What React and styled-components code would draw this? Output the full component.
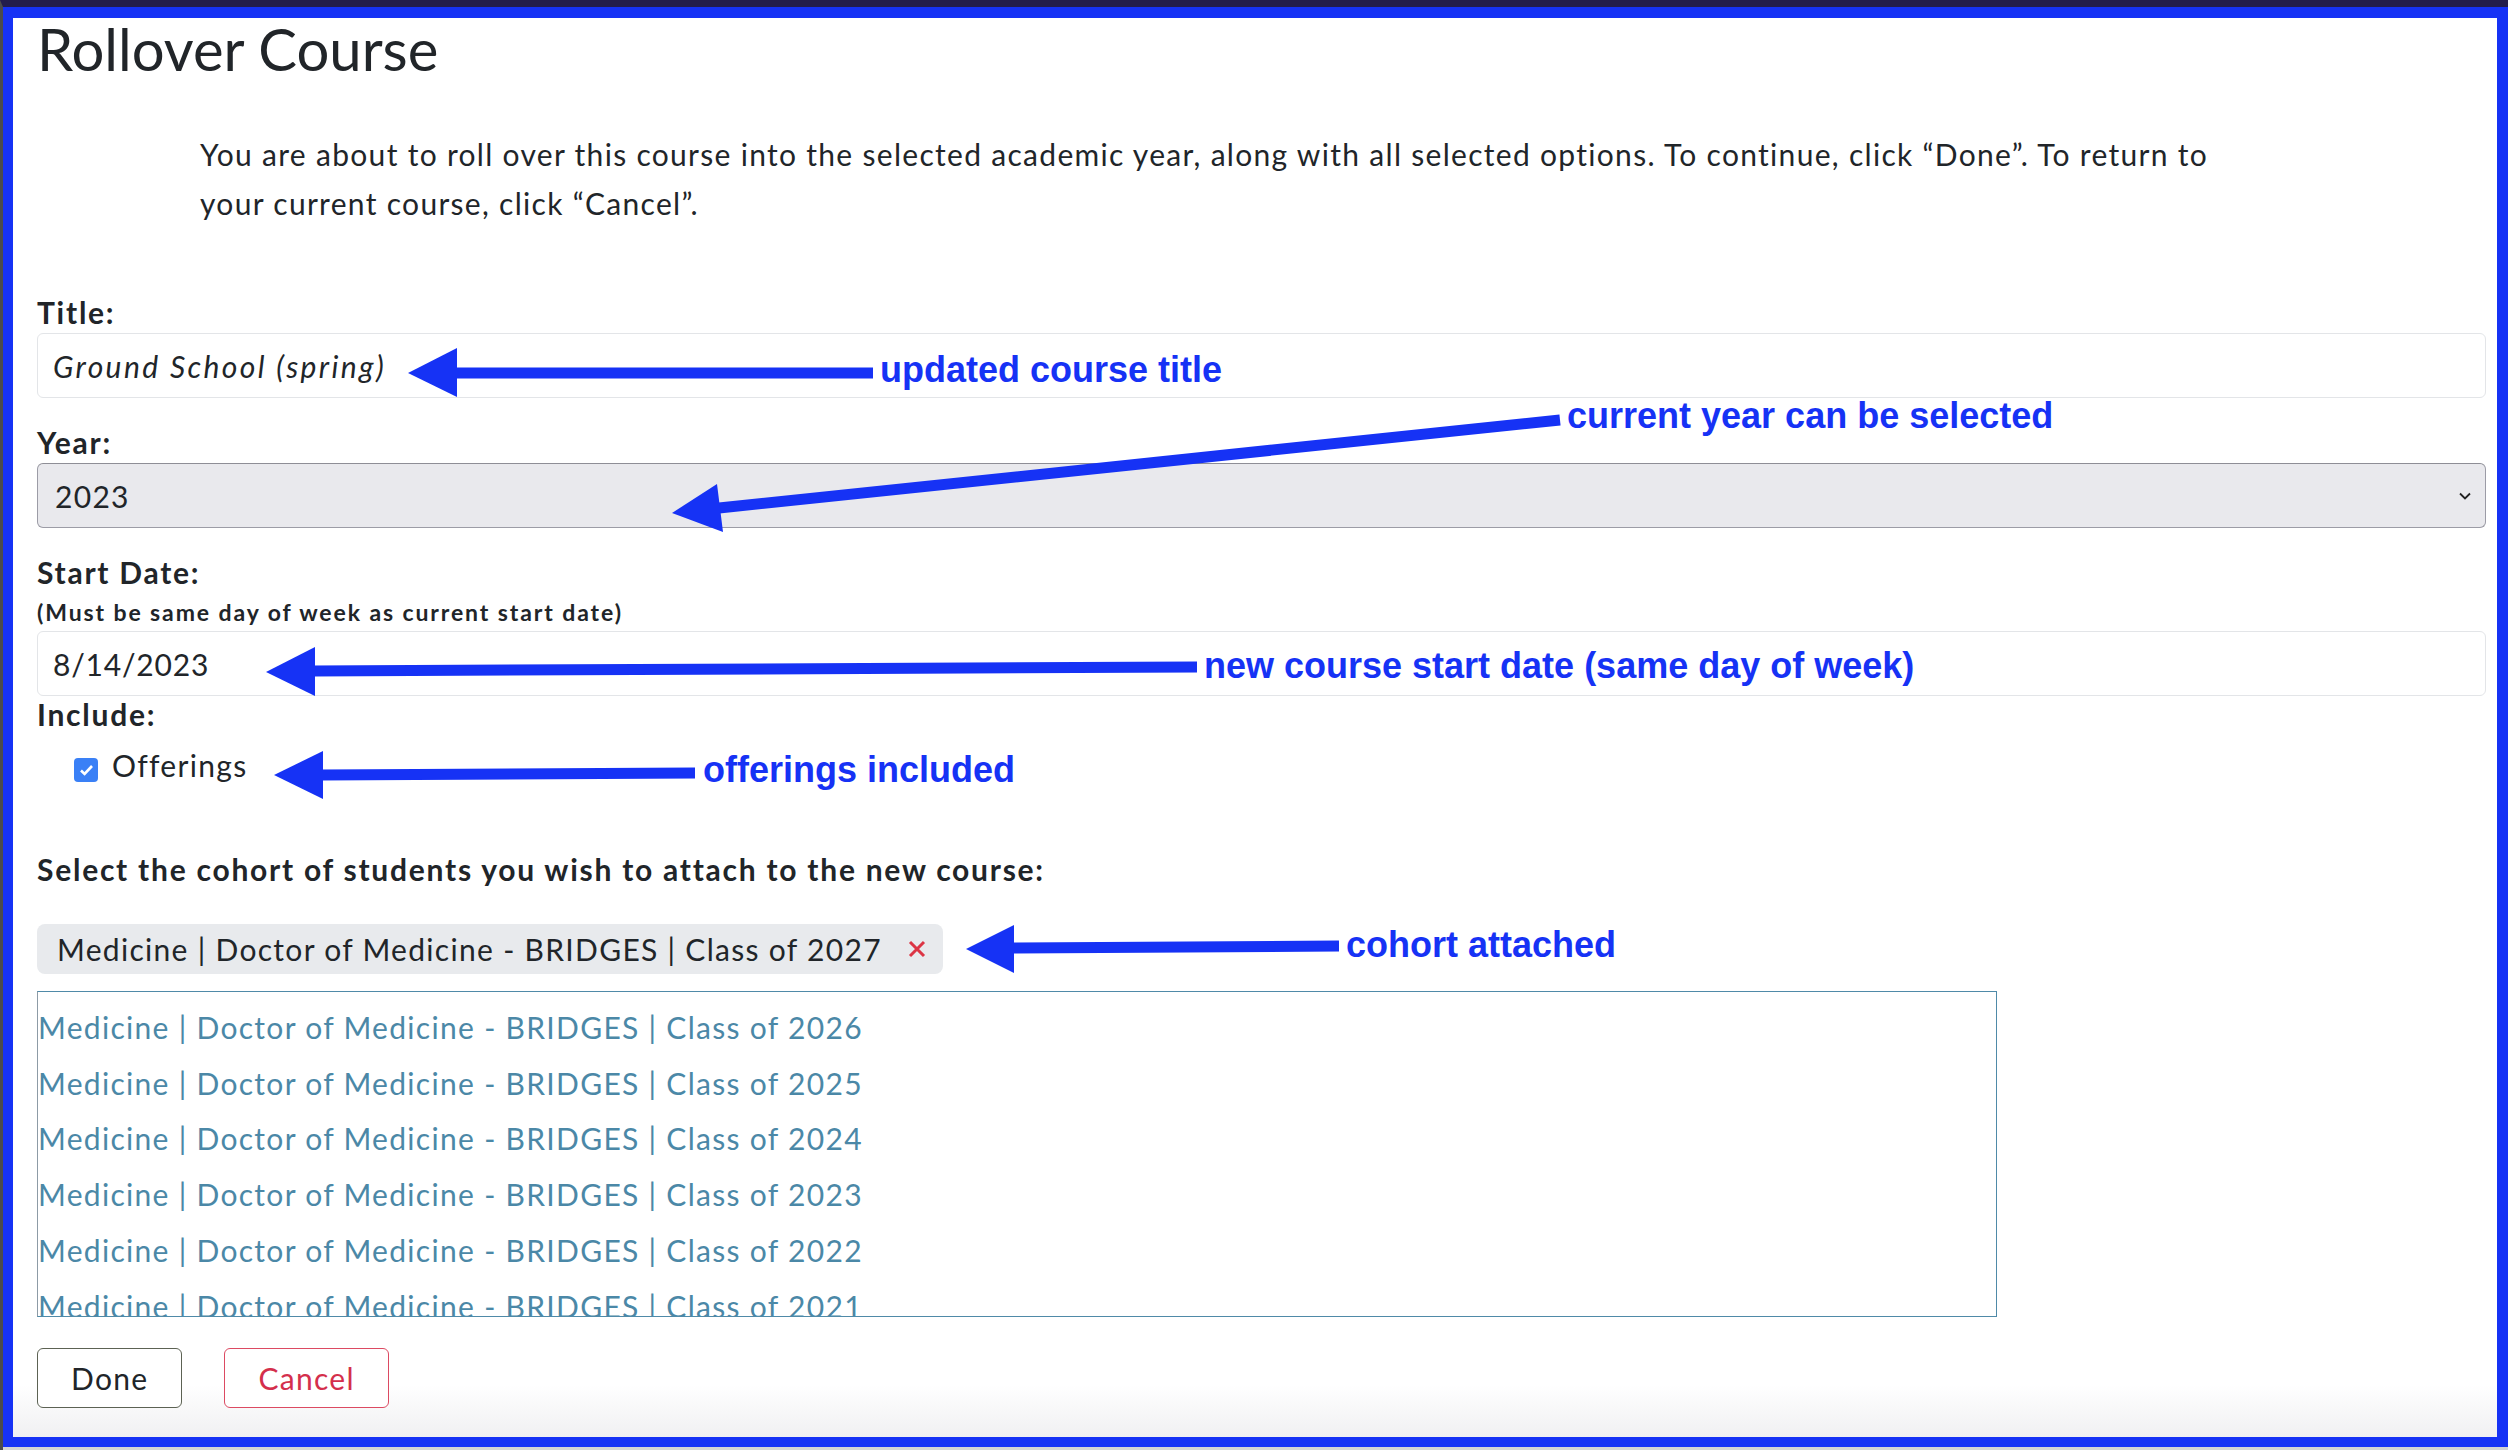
import React from "react";
import styled, { createGlobalStyle } from "styled-components";

const GlobalStyle = createGlobalStyle`
  html, body {
    margin: 0;
    padding: 0;
  }
  body {
    background: #d6d6d6;
    font-family: Lato, "Open Sans", sans-serif;
    color: #212529;
  }
`;

const Page = styled.div`
  position: relative;
  width: 2508px;
  height: 1450px;
  overflow: hidden;
`;

const Shell = styled.div`
  height: 100%;
  box-sizing: border-box;
  border-top: 7px solid #231d4c;
  border-left: 3px solid #4b4b4b;
  padding-bottom: 3px;
  background: #d4d4d4;
`;

const Frame = styled.div`
  height: 100%;
  box-sizing: border-box;
  border: 11px solid #1632f5;
  border-left-width: 10px;
  border-bottom-width: 10px;
  background: linear-gradient(to bottom, #fff calc(100% - 52px), #f0f0f2 100%);
  padding: 2px 11px 0 24px;
  overflow: hidden;
  letter-spacing: 1.3px;
`;

const Heading = styled.h2`
  margin: 0;
  font-size: 58px;
  line-height: 58px;
  font-weight: 400;
  letter-spacing: 0;
`;

const Intro = styled.p`
  margin: 52px 0 0 163px;
  max-width: 2035px;
  font-size: 30px;
  line-height: 49px;
`;

const Form = styled.div`
  display: flex;
  flex-direction: column;
  margin-top: 66px;
`;

const Label = styled.div`
  font-size: 30px;
  line-height: 36px;
  font-weight: 700;
  letter-spacing: 1.75px;
  margin-top: ${(p) => p.$gap || 0}px;
`;

const Hint = styled.div`
  font-size: 23px;
  line-height: 26px;
  font-weight: 700;
  letter-spacing: 1.9px;
  margin-top: 9px;
`;

const TextInput = styled.div`
  height: 65px;
  box-sizing: border-box;
  margin-top: ${(p) => p.$gap || 3}px;
  border: 1.5px solid #e3e5e8;
  border-radius: 6px;
  padding: 0 15px;
  display: flex;
  align-items: center;
  font-size: 30px;
  font-style: ${(p) => (p.$italic ? "italic" : "normal")};
  letter-spacing: ${(p) => (p.$italic ? "2.4px" : "0.8px")};
  background: #fff;
`;

const Select = styled.div`
  height: 65px;
  box-sizing: border-box;
  margin-top: 3px;
  border: 1.5px solid #9c9ca6;
  border-top-color: #8e8e96;
  border-radius: 6px;
  padding: 0 14px 0 17px;
  display: flex;
  align-items: center;
  justify-content: space-between;
  font-size: 30px;
  background: #e9e9ed;
`;

const CheckRow = styled.label`
  display: flex;
  align-items: center;
  gap: 14px;
  margin-top: 15px;
  padding-left: 37px;
  font-size: 30px;
  line-height: 36px;
`;

const CheckBox = styled.span`
  width: 24px;
  height: 24px;
  margin-top: 9px;
  border-radius: 4px;
  background: #3a80f6;
  display: flex;
  align-items: center;
  justify-content: center;
`;

const Chip = styled.div`
  align-self: flex-start;
  margin-top: 37px;
  height: 50px;
  box-sizing: border-box;
  padding: 0 16px 0 20px;
  display: flex;
  align-items: center;
  gap: 25px;
  border-radius: 8px;
  background: #e8eaed;
  font-size: 30px;
  line-height: 36px;
`;

const ListBox = styled.div`
  width: 1960px;
  height: 326px;
  box-sizing: border-box;
  margin-top: 17px;
  border: 1.5px solid #4f8aa8;
  border-left-color: #8d9ba6;
  padding-top: 8px;
  overflow: hidden;
`;

const Option = styled.div`
  font-size: 30px;
  line-height: 55.7px;
  color: #4b88a7;
  white-space: nowrap;
`;

const Actions = styled.div`
  display: flex;
  gap: 42px;
  margin-top: 31px;
`;

const Button = styled.button`
  height: 60px;
  padding: 0 33px;
  border-radius: 6px;
  background: #fff;
  font-family: inherit;
  font-size: 30px;
  letter-spacing: inherit;
  border: 1.5px solid ${(p) => (p.$danger ? "#dc4a62" : "#5c6253")};
  color: ${(p) => (p.$danger ? "#d42f4c" : "#212529")};
`;

const Overlay = styled.svg`
  position: absolute;
  inset: 0;
  pointer-events: none;
`;

const Note = styled.span`
  position: absolute;
  left: ${(p) => p.$x}px;
  top: ${(p) => p.$y}px;
  font-family: "Liberation Sans", Arial, sans-serif;
  font-weight: 700;
  font-size: 36px;
  line-height: 36px;
  color: #1632f5;
  white-space: nowrap;
`;

const BLUE = "#1632f5";

const arrows = [
  { from: [873, 373], to: [456, 373], tip: [408, 373], a: [457, 348], b: [457, 397] },
  { from: [1560, 420], to: [719, 508], tip: [672, 513], a: [717, 484], b: [723, 532] },
  { from: [1197, 667], to: [313, 671], tip: [266, 672], a: [315, 647], b: [315, 696] },
  { from: [695, 773], to: [321, 775], tip: [274, 775], a: [323, 751], b: [323, 799] },
  { from: [1339, 946], to: [1012, 948], tip: [966, 949], a: [1014, 925], b: [1014, 973] },
];

const notes = [
  { x: 880, y: 352, text: "updated course title" },
  { x: 1567, y: 398, text: "current year can be selected" },
  { x: 1204, y: 648, text: "new course start date (same day of week)" },
  { x: 703, y: 752, text: "offerings included" },
  { x: 1346, y: 927, text: "cohort attached" },
];

const cohorts = [2026, 2025, 2024, 2023, 2022, 2021];

const App = () => {
  return (
    <Page>
      <GlobalStyle />
      <Shell>
        <Frame>
          <Heading>Rollover Course</Heading>
          <Intro>
            You are about to roll over this course into the selected academic year, along with
            all selected options. To continue, click “Done”. To return to your current course,
            click “Cancel”.
          </Intro>
          <Form>
            <Label>Title:</Label>
            <TextInput $italic>Ground School (spring)</TextInput>
            <Label $gap={26}>Year:</Label>
            <Select>
              <span>2023</span>
              <svg width="12" height="8" viewBox="0 0 12 8">
                <path d="M1 1.5l5 5 5-5" fill="none" stroke="#222" strokeWidth="1.8" />
              </svg>
            </Select>
            <Label $gap={26}>Start Date:</Label>
            <Hint>(Must be same day of week as current start date)</Hint>
            <TextInput $gap={6}>8/14/2023</TextInput>
            <Label>Include:</Label>
            <CheckRow>
              <CheckBox>
                <svg width="15" height="12" viewBox="0 0 15 12">
                  <path d="M2 6.5l3.6 3.5L13 2" fill="none" stroke="#fff" strokeWidth="2.6" />
                </svg>
              </CheckBox>
              Offerings
            </CheckRow>
            <Label $gap={68}>Select the cohort of students you wish to attach to the new course:</Label>
            <Chip>
              <span>Medicine | Doctor of Medicine - BRIDGES | Class of 2027</span>
              <svg width="20" height="20" viewBox="0 0 20 20">
                <path d="M3 3l14 14M17 3L3 17" stroke="#dc3545" strokeWidth="3" />
              </svg>
            </Chip>
            <ListBox>
              {cohorts.map((year) => (
                <Option key={year}>Medicine | Doctor of Medicine - BRIDGES | Class of {year}</Option>
              ))}
            </ListBox>
            <Actions>
              <Button>Done</Button>
              <Button $danger>Cancel</Button>
            </Actions>
          </Form>
        </Frame>
      </Shell>
      <Overlay width="2508" height="1450" viewBox="0 0 2508 1450">
        {arrows.map((ar, i) => (
          <g key={i} fill={BLUE}>
            <line
              x1={ar.from[0]}
              y1={ar.from[1]}
              x2={ar.to[0]}
              y2={ar.to[1]}
              stroke={BLUE}
              strokeWidth="11"
            />
            <polygon points={[ar.tip, ar.a, ar.b].map((p) => p.join(",")).join(" ")} />
          </g>
        ))}
      </Overlay>
      {notes.map((n) => (
        <Note key={n.text} $x={n.x} $y={n.y}>
          {n.text}
        </Note>
      ))}
    </Page>
  );
};

export default App;
